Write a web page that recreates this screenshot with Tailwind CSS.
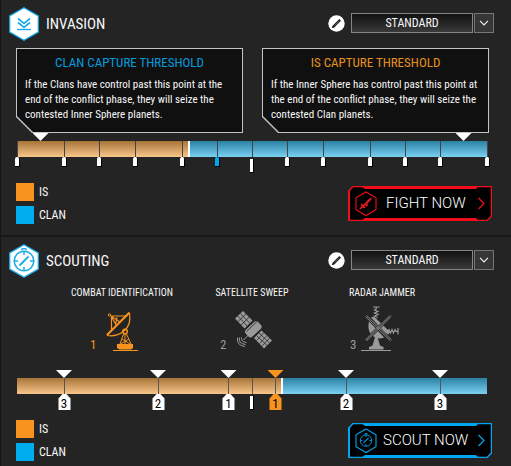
<!DOCTYPE html>
<html lang="en">
<head>
<meta charset="utf-8">
<meta name="viewport" content="width=device-width, initial-scale=1">
<title>Invasion and Scouting</title>
<script src="https://cdn.jsdelivr.net/npm/@tailwindcss/browser@4"></script>
</head>
<body class="min-h-screen border-l border-[#151515] bg-[#242424] font-['Liberation_Sans_Narrow','Roboto_Condensed','Open_Sans_Condensed','Liberation_Sans',sans-serif] text-[13px] text-[#f8f8f8]">

<svg class="hidden" aria-hidden="true">
  <defs>
    <symbol id="pencil" viewBox="0 0 17 17">
      <circle cx="8.5" cy="8.5" r="8.2" fill="#fff"/>
      <path d="M3.700 13.300 4.600 10.700 11.300 4 13 5.700 6.300 12.400Z" fill="#1a1a1a"/>
      <path d="M6.600 10.600 11.400 5.800" stroke="#999" stroke-width=".6"/>
    </symbol>
    <symbol id="down" viewBox="0 0 10 6"><path d="M1 .8 5 4.8 9 .8" fill="none" stroke="#eee" stroke-width="1.2"/></symbol>
    <symbol id="compass" viewBox="0 0 24 24">
      <g fill="none" stroke="currentColor" stroke-width="1.5">
        <circle cx="12" cy="13" r="9.8"/>
        <path d="M12 3v4M12 19v4M2 13h4M18 13h4M9.5 2.2a2.5 1.6 0 0 1 5 0"/>
        <path d="M7.500 17.500 16.500 8.500" stroke-width="1.800"/>
      </g>
    </symbol>
    <symbol id="frame" viewBox="0 0 144 35">
      <path d="M5 .5H143.500V30L139 34.500H.5V5Z" fill="#000"/>
      <path d="M5 .5H143.500V30L139 34.500H1V5Z" fill="none" stroke="currentColor" stroke-width="1.4"/>
      <path d="M1 4V34.500" stroke="currentColor" stroke-width="2"/>
      <path d="M13 0H131L128 3H17ZM17 32H128L131 35H13Z" fill="currentColor"/>
      <path d="M130.500 12 136 17.500 130.500 23" fill="none" stroke="currentColor" stroke-width="1.2"/>
      <path d="M18 6 28 11.800V23.700L18 29.500 8 23.700V11.800Z" fill="none" stroke="currentColor" stroke-width="1.1"/>
    </symbol>
    <symbol id="house" viewBox="0 0 13 16"><path d="M4.500 0H8.500L12.500 4.500V16H.5V4.500Z" fill="currentColor"/></symbol>
  </defs>
</svg>

<main>
<section class="border-b-2 border-[#181818] pt-[7px] pb-[11px]">
  <header class="flex h-[34px] items-center pr-[17px] pl-2">
    <svg class="h-[34px] w-[30px]" viewBox="0 0 30 34" aria-hidden="true">
      <path d="M15 .8 29.300 9V25L15 33.200.7 25V9Z" fill="#fff" stroke="#1ca9e6" stroke-width="1.300"/>
      <g fill="none" stroke="#1ca9e6" stroke-width="1.700"><path d="M9 11.500 15 16.500 21 11.500M9 15.500 15 20.500 21 15.500"/><path d="M8 22.500H22" stroke-width="1.400"/></g>
    </svg>
    <h2 class="ml-[7px] flex-1 text-[15px]">INVASION</h2>
    <button class="mr-[6px] mb-[2px]" aria-label="Edit invasion loadout"><svg class="size-[17px]"><use href="#pencil"/></svg></button>
    <label class="mb-[2px] flex h-5 gap-px">
      <select aria-label="Invasion loadout" class="w-[122px] appearance-none border border-[#858585] bg-linear-to-b from-[#111] to-[#3a3a3a] text-center text-xs leading-[18px]"><option>STANDARD</option></select>
      <span class="flex w-5 items-center justify-center border border-[#757575] bg-[#363636]"><svg class="h-[6px] w-[10px]"><use href="#down"/></svg></span>
    </label>
  </header>

  <div class="mt-[7px] flex gap-[19px] pr-[22px] pl-[15px]">
    <article class="flex-1 bg-[#c4c4c8] p-px [clip-path:polygon(0_0,100%_0,100%_100%,16px_100%,0_calc(100%-16px))]">
      <div class="h-[83px] bg-[#101010] px-2 pt-[5px] [clip-path:polygon(0_0,100%_0,100%_100%,16px_100%,0_calc(100%-16px))]">
        <h3 class="text-center text-[13px] leading-[17px] text-[#079bdd]">CLAN CAPTURE THRESHOLD</h3>
        <p class="mt-[6px] text-[11px] leading-[15px]">If the Clans have control past this point at the<br>end of the conflict phase, they will seize the<br>contested Inner Sphere planets.</p>
      </div>
    </article>
    <article class="flex-1 bg-[#c4c4c8] p-px [clip-path:polygon(0_0,100%_0,100%_100%,16px_100%,0_calc(100%-16px))]">
      <div class="h-[83px] bg-[#101010] px-2 pt-[5px] [clip-path:polygon(0_0,100%_0,100%_100%,16px_100%,0_calc(100%-16px))]">
        <h3 class="text-center text-[13px] leading-[17px] text-[#e8901f]">IS CAPTURE THRESHOLD</h3>
        <p class="mt-[6px] text-[11px] leading-[15px]">If the Inner Sphere has control past this point at<br>the end of the conflict phase, they will seize the<br>contested Clan planets.</p>
      </div>
    </article>
  </div>

  <div class="relative mt-2 mr-6 ml-4 flex h-4" role="img" aria-label="Invasion control">
    <div class="w-[36.4%] bg-linear-to-b from-[#a87538] to-[#f8c68b]"></div>
    <div class="flex-1 border-l-2 border-white bg-linear-to-b from-[#2a82a3] to-[#79d1f3]"></div>
    <i class="absolute -top-2 left-[5%] h-2 w-4 -translate-x-1/2 bg-white [clip-path:polygon(0_0,100%_0,50%_100%)]"></i>
    <i class="absolute -top-2 left-[95%] h-2 w-4 -translate-x-1/2 bg-white [clip-path:polygon(0_0,100%_0,50%_100%)]"></i>
    <i class="absolute top-0 left-0 h-4 w-px bg-[#444]"><b class="absolute top-4 -left-[2px] h-[10px] w-[5px] rounded-t-xs border-r border-b border-black bg-white"></b></i>
    <i class="absolute top-0 left-[10%] h-4 w-px bg-[#444]"><b class="absolute top-4 -left-[2px] h-[10px] w-[5px] rounded-t-xs border-r border-b border-black bg-white"></b></i>
    <i class="absolute top-0 left-[17.5%] h-4 w-px bg-[#444]"><b class="absolute top-4 -left-[2px] h-[10px] w-[5px] rounded-t-xs border-r border-b border-black bg-white"></b></i>
    <i class="absolute top-0 left-[25%] h-4 w-px bg-[#444]"><b class="absolute top-4 -left-[2px] h-[10px] w-[5px] rounded-t-xs border-r border-b border-black bg-white"></b></i>
    <i class="absolute top-0 left-[35%] h-4 w-px bg-[#444]"><b class="absolute top-4 -left-[2px] h-[10px] w-[5px] rounded-t-xs border-r border-b border-black bg-white"></b></i>
    <i class="absolute top-0 left-[42.5%] h-4 w-px bg-[#444]"><b class="absolute top-4 -left-[2px] h-[10px] w-[5px] rounded-t-xs border-r border-b border-black bg-[#00a9eb]"></b></i>
    <i class="absolute top-0 left-[50%] h-4 w-px bg-[#444]"><b class="absolute top-[18px] -left-[2px] h-[14px] w-[4px] border-r border-b border-black bg-white"></b></i>
    <i class="absolute top-0 left-[57.5%] h-4 w-px bg-[#444]"><b class="absolute top-4 -left-[2px] h-[10px] w-[5px] rounded-t-xs border-r border-b border-black bg-white"></b></i>
    <i class="absolute top-0 left-[65%] h-4 w-px bg-[#444]"><b class="absolute top-4 -left-[2px] h-[10px] w-[5px] rounded-t-xs border-r border-b border-black bg-white"></b></i>
    <i class="absolute top-0 left-[75%] h-4 w-px bg-[#444]"><b class="absolute top-4 -left-[2px] h-[10px] w-[5px] rounded-t-xs border-r border-b border-black bg-white"></b></i>
    <i class="absolute top-0 left-[82.5%] h-4 w-px bg-[#444]"><b class="absolute top-4 -left-[2px] h-[10px] w-[5px] rounded-t-xs border-r border-b border-black bg-white"></b></i>
    <i class="absolute top-0 left-[90%] h-4 w-px bg-[#444]"><b class="absolute top-4 -left-[2px] h-[10px] w-[5px] rounded-t-xs border-r border-b border-black bg-white"></b></i>
    <i class="absolute top-0 left-[100%] h-4 w-px bg-[#444]"><b class="absolute top-4 -left-[2px] h-[10px] w-[5px] rounded-t-xs border-r border-b border-black bg-white"></b></i>
  </div>

  <div class="mt-[25px] flex items-center justify-between pr-[19px] pl-[15px]">
    <ul class="space-y-1 text-xs">
      <li class="flex h-[19px] items-center gap-[5px]"><span class="size-[18px] bg-[#f7931e]"></span><span>IS</span></li>
      <li class="flex h-[19px] items-center gap-[5px]"><span class="size-[18px] bg-[#00aeef]"></span><span>CLAN</span></li>
    </ul>
    <button class="relative h-[35px] w-[144px] pl-[38px] text-left font-[Roboto,sans-serif] text-[15px] font-light text-white">
      <svg class="absolute inset-0 h-[35px] w-[144px] text-[#f20d1a]" aria-hidden="true"><use href="#frame"/><g fill="#e01b24"><path d="M14.500 19.500 21.500 12.500 24 11.500 23 14 16 21Z"/><path d="M13.500 17.500 17.500 21.500 16 22.500 12.500 19ZM11.500 22.500 14 19.500 15.500 21 12.500 23.500ZM18 19.500 20 17.500V19.500L18 21Z"/></g></svg>
      <span class="relative">FIGHT NOW</span>
    </button>
  </div>
</section>

<section class="pt-[7px]">
  <header class="flex h-[34px] items-center pr-[17px] pl-2">
    <svg class="h-[34px] w-[30px] text-[#1ca9e6]" viewBox="0 0 30 34" aria-hidden="true">
      <path d="M15 .8 29.300 9V25L15 33.200.7 25V9Z" fill="#fff" stroke="currentColor" stroke-width="1.300"/>
      <use href="#compass" x="3" y="4" width="24" height="24"/>
    </svg>
    <h2 class="ml-[7px] flex-1 text-[15px]">SCOUTING</h2>
    <button class="mr-[6px] mb-[2px]" aria-label="Edit scouting loadout"><svg class="size-[17px]"><use href="#pencil"/></svg></button>
    <label class="mb-[2px] flex h-5 gap-px">
      <select aria-label="Scouting loadout" class="w-[122px] appearance-none border border-[#858585] bg-linear-to-b from-[#111] to-[#3a3a3a] text-center text-xs leading-[18px]"><option>STANDARD</option></select>
      <span class="flex w-5 items-center justify-center border border-[#757575] bg-[#363636]"><svg class="h-[6px] w-[10px]"><use href="#down"/></svg></span>
    </label>
  </header>

  <div class="mt-2 mr-6 ml-4">
  <ul class="mx-auto grid max-w-[390px] grid-cols-3 text-center text-[10px] leading-[14px]">
    <li>
      <h3>COMBAT IDENTIFICATION</h3>
      <div class="mt-[6px] flex items-end pl-[33px] text-[#f7931e]">
        <span class="w-[11px] text-left text-[13px]">1</span>
        <svg class="h-[46px] w-[42px]" viewBox="0 0 42 46" fill="none" stroke="currentColor" aria-hidden="true">
          <circle cx="8.500" cy="9" r="1.200"/>
          <path d="M6 29 28.500 6.500" stroke-width="2.200"/>
          <path d="M28.500 7Q30.500 19 23 25T6 29.500M10 10H26M10.500 10.500V24M10.500 10.500 19 16M10.500 10.500 15 19M16 11.500 14.500 18" stroke-width="1.200"/>
          <circle cx="24" cy="25.500" r="2.300" stroke-width="1.500"/>
          <path d="M22.500 28 19 38M25.500 28 30 38M24 28V38M21 33 29 38M28 33 19.500 38"/>
          <path d="M16 38H32V42L30 43.500H18.500L16 42Z" fill="currentColor" stroke="none"/>
          <path d="M12 44.500H37"/>
        </svg>
      </div>
    </li>
    <li>
      <h3>SATELLITE SWEEP</h3>
      <div class="mt-[6px] flex items-end pl-[33px] text-[#9a9a9a]">
        <span class="w-[11px] text-left text-[13px]">2</span>
        <svg class="h-[46px] w-[42px]" viewBox="0 0 42 46" fill="none" stroke="currentColor" aria-hidden="true">
          <path d="M4 12.500 12 5 21.500 14.500 13.500 22.500ZM30.500 24.500 41 34.500 33 42.500 23 32Z" fill="currentColor" stroke="none"/>
          <path d="M6.700 10 16.200 20M9.400 7.500 19 17.500M7 15.500 15 8M10 19 18.200 11.200M28 27 38.500 37M25.500 29.500 36 39.500M33 26.500 25.500 34.500M36 29.500 28.500 37.500M38.500 32 31 40" stroke="#242424" stroke-width=".8"/>
          <rect x="14" y="18.500" width="17" height="9.500" rx="3" transform="rotate(-43 22.500 23.500)" fill="currentColor" stroke="none"/>
          <path d="M15.500 25.500 26 15.500" stroke="#242424" stroke-width=".8"/>
          <path d="M18 28.500 12.500 34"/>
          <path d="M10.500 31.500Q10 36 15.500 36.500M8.500 31.500Q7 37.500 14.500 38.500M6.500 31.500Q5.500 39.500 14 40.500"/>
        </svg>
      </div>
    </li>
    <li>
      <h3>RADAR JAMMER</h3>
      <div class="mt-[6px] flex items-end pl-[33px] text-[#9a9a9a]">
        <span class="w-[11px] text-left text-[13px]">3</span>
        <svg class="h-[46px] w-[42px]" viewBox="0 0 42 46" fill="none" stroke="currentColor" aria-hidden="true">
          <path d="M12 1H18.500M15.200 1V3L13.500 4 17 5.500 13.500 7 17 8.500 13.500 10 16.500 11.500M37 22V28.500M37 25.300H35L34 23.500 32.500 27 31 23.500 29.500 27 28 23.500 26.500 26" stroke-width="1.200"/>
          <path d="M8 15C6.500 22 8 27 12 30S20 33 23 31.500ZM10 11.500 13 10.500 29 26 27.500 28.500 24 27Z" fill="currentColor" stroke="none"/>
          <path d="M5 10 30 34.500M29.500 10 5 34.500" stroke="#242424" stroke-width="3.600"/>
          <path d="M4.500 10.500 29.500 35M5.700 9.500 30.500 33.800M29 9.500 4.500 34M30 10.500 5.500 35" stroke-width=".9"/>
          <path d="M14 31H16.500L19 39.500 22.500 41V43.500H8V41L11.500 39.500Z" fill="currentColor" stroke="none"/>
          <path d="M0 44.500H30"/>
        </svg>
      </div>
    </li>
  </ul>
  </div>

  <div class="relative mt-[26px] mr-6 ml-4 flex h-4 text-[13px] leading-none text-black" role="group" aria-label="Scouting control">
    <div class="w-[56.2%] bg-linear-to-b from-[#a87538] to-[#f8c68b]"></div>
    <div class="flex-1 border-l-2 border-white bg-linear-to-b from-[#2a82a3] to-[#79d1f3]"></div>
    <div class="absolute -top-2 left-[10%] flex w-4 -translate-x-1/2 flex-col items-center text-white"><i class="h-2 w-4 bg-current [clip-path:polygon(0_0,100%_0,50%_100%)]"></i><i class="h-4 w-px bg-[#555]"></i><span class="relative h-4 w-[13px]"><svg class="absolute inset-0 h-4 w-[13px]"><use href="#house"/></svg><span class="relative block pt-[3px] text-center text-black">3</span></span></div>
    <div class="absolute -top-2 left-[30%] flex w-4 -translate-x-1/2 flex-col items-center text-white"><i class="h-2 w-4 bg-current [clip-path:polygon(0_0,100%_0,50%_100%)]"></i><i class="h-4 w-px bg-[#555]"></i><span class="relative h-4 w-[13px]"><svg class="absolute inset-0 h-4 w-[13px]"><use href="#house"/></svg><span class="relative block pt-[3px] text-center text-black">2</span></span></div>
    <div class="absolute -top-2 left-[45%] flex w-4 -translate-x-1/2 flex-col items-center text-white"><i class="h-2 w-4 bg-current [clip-path:polygon(0_0,100%_0,50%_100%)]"></i><i class="h-4 w-px bg-[#555]"></i><span class="relative h-4 w-[13px]"><svg class="absolute inset-0 h-4 w-[13px]"><use href="#house"/></svg><span class="relative block pt-[3px] text-center text-black">1</span></span></div>
    <i class="absolute top-0 left-[50%] h-4 w-px bg-[#555]"><b class="absolute top-[18px] -left-[2px] h-[14px] w-[4px] border-r border-b border-black bg-white"></b></i>
    <div class="absolute -top-2 left-[55%] flex w-4 -translate-x-1/2 flex-col items-center text-[#f7931e]"><i class="h-2 w-4 bg-current [clip-path:polygon(0_0,100%_0,50%_100%)]"></i><i class="h-4 w-px bg-[#555]"></i><span class="relative h-4 w-[13px]"><svg class="absolute inset-0 h-4 w-[13px]"><use href="#house"/></svg><span class="relative block pt-[3px] text-center text-black">1</span></span></div>
    <div class="absolute -top-2 left-[70%] flex w-4 -translate-x-1/2 flex-col items-center text-white"><i class="h-2 w-4 bg-current [clip-path:polygon(0_0,100%_0,50%_100%)]"></i><i class="h-4 w-px bg-[#555]"></i><span class="relative h-4 w-[13px]"><svg class="absolute inset-0 h-4 w-[13px]"><use href="#house"/></svg><span class="relative block pt-[3px] text-center text-black">2</span></span></div>
    <div class="absolute -top-2 left-[90%] flex w-4 -translate-x-1/2 flex-col items-center text-white"><i class="h-2 w-4 bg-current [clip-path:polygon(0_0,100%_0,50%_100%)]"></i><i class="h-4 w-px bg-[#555]"></i><span class="relative h-4 w-[13px]"><svg class="absolute inset-0 h-4 w-[13px]"><use href="#house"/></svg><span class="relative block pt-[3px] text-center text-black">3</span></span></div>
  </div>

  <div class="mt-[25px] flex items-center justify-between pr-[19px] pl-[15px]">
    <ul class="space-y-1 text-xs">
      <li class="flex h-[19px] items-center gap-[5px]"><span class="size-[18px] bg-[#f7931e]"></span><span>IS</span></li>
      <li class="flex h-[19px] items-center gap-[5px]"><span class="size-[18px] bg-[#00aeef]"></span><span>CLAN</span></li>
    </ul>
    <button class="relative h-[35px] w-[144px] pl-[35px] text-left font-[Roboto,sans-serif] text-[15px] font-light text-white">
      <svg class="absolute inset-0 h-[35px] w-[144px] text-[#00a6f0]" aria-hidden="true"><use href="#frame"/><use href="#compass" x="11" y="10" width="14" height="14"/></svg>
      <span class="relative">SCOUT NOW</span>
    </button>
  </div>
</section>
</main>
</body>
</html>
